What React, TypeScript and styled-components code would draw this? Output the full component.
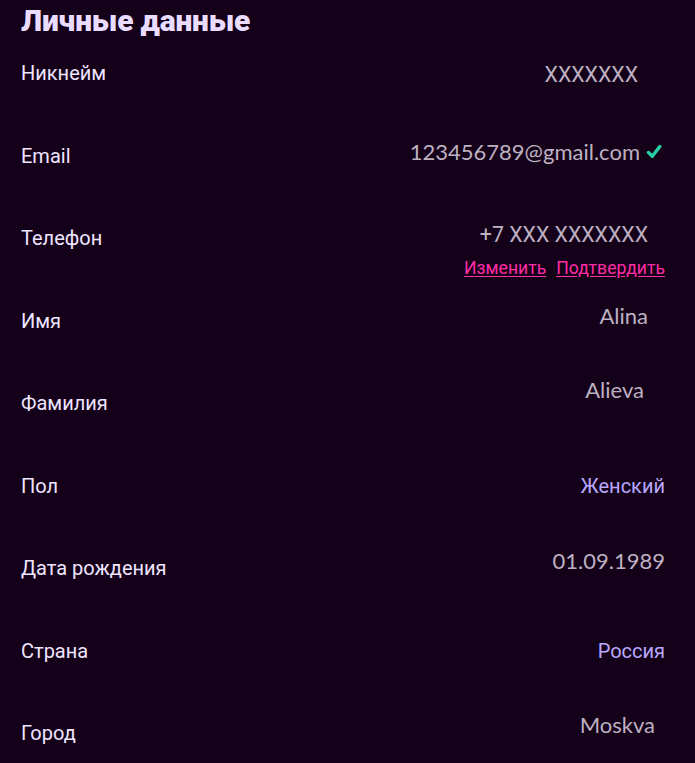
import styled, { createGlobalStyle } from 'styled-components'

const GlobalStyle = createGlobalStyle`
	html, body {
		margin: 0;
		padding: 0;
		background: #150019;
	}
	body {
		font-family: Roboto, "Noto Sans", sans-serif;
	}
`

const Page = styled.div`
	min-height: 763px;
	padding: 10px 30px 0 21px;
	box-sizing: border-box;
	background: #150019;
`

const Title = styled.h1`
	margin: 0;
	font-family: Roboto, sans-serif;
	font-size: 30px;
	font-weight: 900;
	line-height: 22px;
	color: #e9dcff;
	letter-spacing: -0.2px;
`

const Row = styled.div`
	display: flex;
	align-items: center;
	justify-content: space-between;
	height: 82.5px;
`

const Label = styled.span`
	font-family: Roboto, sans-serif;
	font-size: 20px;
	color: #eee6ff;
`

// lift moves the value up (negative = down), inset pushes it from the right edge
const ValueBox = styled.div<{ $lift?: number; $inset?: number }>`
	display: flex;
	flex-direction: column;
	align-items: flex-end;
	margin-bottom: ${(p) => (p.$lift ?? 0) * 2}px;
	margin-right: ${(p) => p.$inset ?? 0}px;
`

const Value = styled.span<{ $inset?: number; $plain?: boolean }>`
	display: flex;
	align-items: center;
	gap: 6px;
	font-family: ${(p) => (p.$plain ? 'Roboto, sans-serif' : 'Lato, "Open Sans", sans-serif')};
	font-size: ${(p) => (p.$plain ? '21.3px' : '22px')};
	line-height: 30px;
	color: #bdb1c1;
	margin-right: ${(p) => p.$inset ?? 0}px;
`

const Choice = styled.span`
	font-family: Roboto, sans-serif;
	font-size: 20px;
	color: #b8a9ff;
`

const Links = styled.div`
	display: flex;
	gap: 10px;
	margin-top: 7px;
`

const Link = styled.a`
	font-family: Roboto, sans-serif;
	font-size: 17.6px;
	line-height: 22px;
	color: #ff2da6;
	text-decoration: underline;
	text-underline-offset: 2px;
	cursor: pointer;
`

const Check = () => (
	<svg width='16' height='15' viewBox='0 0 16 15' fill='none'>
		<path
			d='M2.5 8.5 L6.3 12.3 L13.8 2.5'
			stroke='#27cfa6'
			strokeWidth='3.4'
			strokeLinecap='round'
			strokeLinejoin='round'
		/>
	</svg>
)

export default function App() {
	return (
		<>
			<GlobalStyle />
			<Page>
				<Title>Личные данные</Title>

				<Row>
					<Label>Никнейм</Label>
					<ValueBox $lift={-2} $inset={27}>
						<Value $plain>XXXXXXX</Value>
					</ValueBox>
				</Row>

				<Row>
					<Label>Email</Label>
					<ValueBox $lift={4} $inset={3}>
						<Value>
							123456789@gmail.com
							<Check />
						</Value>
					</ValueBox>
				</Row>

				<Row>
					<Label>Телефон</Label>
					<ValueBox $lift={-11}>
						<Value $plain $inset={17}>
							+7 XXX XXXXXXX
						</Value>
						<Links>
							<Link>Изменить</Link>
							<Link>Подтвердить</Link>
						</Links>
					</ValueBox>
				</Row>

				<Row>
					<Label>Имя</Label>
					<ValueBox $lift={5} $inset={17}>
						<Value>Alina</Value>
					</ValueBox>
				</Row>

				<Row>
					<Label>Фамилия</Label>
					<ValueBox $lift={13} $inset={21}>
						<Value>Alieva</Value>
					</ValueBox>
				</Row>

				<Row>
					<Label>Пол</Label>
					<ValueBox>
						<Choice>Женский</Choice>
					</ValueBox>
				</Row>

				<Row>
					<Label>Дата рождения</Label>
					<ValueBox $lift={7}>
						<Value>01.09.1989</Value>
					</ValueBox>
				</Row>

				<Row>
					<Label>Страна</Label>
					<ValueBox>
						<Choice>Россия</Choice>
					</ValueBox>
				</Row>

				<Row>
					<Label>Город</Label>
					<ValueBox $lift={8} $inset={10}>
						<Value>Moskva</Value>
					</ValueBox>
				</Row>
			</Page>
		</>
	)
}
